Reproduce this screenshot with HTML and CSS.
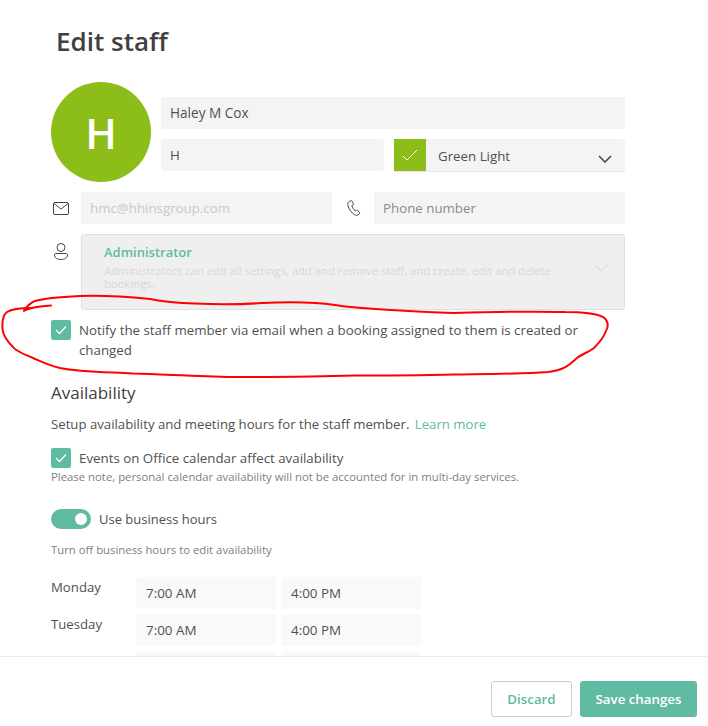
FILE: index.html
```html
<!DOCTYPE html>
<html lang="en">
<head>
<meta charset="utf-8">
<title>Edit staff</title>
<link rel="stylesheet" href="styles.css">
</head>
<body>
<div class="page">
  <main class="content">
    <h1 class="title">Edit staff</h1>
    <section class="identity">
      <div class="avatar">H</div>
      <div class="identity-fields">
        <div class="field name-field">Haley M Cox</div>
        <div class="identity-row">
          <div class="field grow">H</div>
          <div class="color-select">
            <span class="swatch"><svg width="16" height="12" viewBox="0 0 16 12"><path d="M1 7l4 4L15 1" fill="none" stroke="#fff" stroke-width="1"/></svg></span>
            <span class="color-name">Green Light</span>
            <svg class="chev" width="14" height="8" viewBox="0 0 14 8"><path d="M1 1l6 6 6-6" fill="none" stroke="#444" stroke-width="1.5"/></svg>
          </div>
        </div>
      </div>
    </section>
    <section class="contact">
      <svg class="icon-mail" width="16" height="13" viewBox="0 0 16 13"><rect x=".5" y=".5" width="15" height="12" rx="1.5" fill="none" stroke="#444"/><path d="M1 1.5l7 5.5 7-5.5" fill="none" stroke="#444"/></svg>
      <div class="field grow muted">hmc@hhinsgroup.com</div>
      <svg class="icon-phone" width="14" height="16" viewBox="0 0 14 16"><path d="M3.5.8L1.6 2C.6 2.700.5 4 .9 5.500c1 3.600 3.500 7.200 6.800 9.300 1 .6 2 .8 3 .2l1.500-1c.5-.4.5-.9.200-1.400l-1.500-2c-.4-.5-.9-.6-1.400-.3l-1.300.8C6.700 9.600 5.300 7.400 4.800 5.700l1.200-.9c.4-.3.500-.8.300-1.300L5 1.200C4.700.6 4.100.4 3.500.8z" fill="none" stroke="#444"/></svg>
      <div class="field grow placeholder">Phone number</div>
    </section>
    <section class="role-row">
      <svg class="icon-person" width="14" height="18" viewBox="0 0 14 18"><circle cx="7" cy="4.500" r="4" fill="none" stroke="#444"/><path d="M2 10.500h10c1 0 1.500.5 1.500 1.500 0 3-3 4.500-6.500 4.500S.5 15 .5 12c0-1 .5-1.500 1.500-1.500z" fill="none" stroke="#444"/></svg>
      <div class="role">
        <div class="role-text">
          <div class="role-name">Administrator</div>
          <div class="role-desc">Administrators can edit all settings, add and remove staff, and create, edit and delete bookings.</div>
        </div>
        <svg class="role-chev" width="14" height="8" viewBox="0 0 14 8"><path d="M1 1l6 6 6-6" fill="none" stroke="#ddd" stroke-width="1.200"/></svg>
      </div>
    </section>
    <label class="check notify">
      <span class="box"><svg width="12" height="10" viewBox="0 0 12 10"><path d="M1 5l3.500 3.500L11 1.500" fill="none" stroke="#fff" stroke-width="1.300"/></svg></span>
      <span class="check-text">Notify the staff member via email when a booking assigned to them is created or changed</span>
    </label>
    <h2 class="section-title">Availability</h2>
    <p class="intro">Setup availability and meeting hours for the staff member. <a class="link">Learn more</a></p>
    <label class="check events">
      <span class="box"><svg width="12" height="10" viewBox="0 0 12 10"><path d="M1 5l3.500 3.500L11 1.500" fill="none" stroke="#fff" stroke-width="1.300"/></svg></span>
      <span class="check-text">Events on Office calendar affect availability</span>
    </label>
    <p class="note events-note">Please note, personal calendar availability will not be accounted for in multi-day services.</p>
    <div class="toggle-row">
      <span class="toggle"><span class="knob"></span></span>
      <span class="toggle-label">Use business hours</span>
    </div>
    <p class="note hours-note">Turn off business hours to edit availability</p>
    <div class="hours">
      <div class="day">Monday</div><div class="time">7:00 AM</div><div class="time">4:00 PM</div>
      <div class="day">Tuesday</div><div class="time">7:00 AM</div><div class="time">4:00 PM</div>
      <div class="day"></div><div class="time"></div><div class="time"></div>
    </div>
  </main>
  <footer class="footer">
    <button class="btn btn-ghost">Discard</button>
    <button class="btn btn-primary">Save changes</button>
  </footer>
  <svg class="scribble" width="708" height="726" viewBox="0 0 708 726"><path d="M51 305.500C42 306 32 307 24 310.500M24 311C27 306 30 303 35 301C45 298 60 297 80 296C105 295 130 297 150 299C165 302 178 303 195 303.500C215 304.500 240 304.500 262 303C285 302 315 302 335 305C360 309 400 311 454 313C490 312 530 311 565 312C580 312 595 313 603 317C608 320 609 326 606 331C603 339 598 344 594 348C589 352 582 354 577 358C570 364 565 370 548 372C520 374 490 374 454 374.500C420 375 390 375.500 354 375.500C310 377 270 377 233 377C195 376 165 374.500 133 373.500C105 372 80 372 60 368C48 365 40 361 33 358C24 354 17 352 13 347C7 341 3 336 2.500 329C2 322 3 315 7 312C12 309 20 308 30 308" fill="none" stroke="#f00" stroke-width="2" stroke-linecap="round" stroke-linejoin="round"/></svg>
</div>
</body>
</html>
```
FILE: styles.css
```css
* { box-sizing: border-box; }
html, body { margin: 0; padding: 0; background: #fff; }
body { font-family: "Open Sans", "Noto Sans", "Liberation Sans", sans-serif; color: #444; font-size: 13.3px; }
.page { position: relative; width: 708px; height: 726px; display: flex; flex-direction: column; overflow: hidden; }
.content { height: 656px; flex: none; overflow: hidden; padding: 24px 83px 0 51px; }
.title { margin: 0 0 24px 5px; height: 34px; font-size: 26px; line-height: 34px; font-weight: 600; color: #404040; }
.identity { display: flex; gap: 10px; align-items: flex-start; height: 100px; }
.avatar { width: 100px; height: 100px; border-radius: 50%; background: #8cbd18; color: #fff; font-size: 42px; font-weight: 600; display: flex; align-items: center; justify-content: center; flex: none; }
.identity-fields { flex: 1; display: flex; flex-direction: column; gap: 10px; margin-top: 15px; }
.identity-row { display: flex; gap: 10px; }
.field { height: 32px; background: #f4f4f4; border-radius: 2px; padding: 0 9px; display: flex; align-items: center; font-size: 13.3px; color: #505050; }
.name-field { font-size: 13.6px; padding-bottom: 1px; }
.grow { flex: 1 1 0; min-width: 0; }
.muted { color: #c8c8c8; }
.placeholder { color: #8a8a8a; }
.color-select { width: 231px; height: 33px; flex: none; background: #f4f4f4; border-bottom: 1px solid #e8e8e8; border-radius: 2px; display: flex; align-items: center; position: relative; }
.swatch { width: 32px; height: 32px; background: #8cbd18; display: flex; align-items: center; justify-content: center; align-self: flex-start; }
.color-name { margin-left: 12px; padding-top: 1px; color: #505050; }
.chev { position: absolute; right: 13px; top: 16px; }
.contact { display: flex; align-items: center; margin: 10px 0 10px 2px; height: 32px; }
.icon-mail { flex: none; margin-right: 12px; }
.icon-phone { flex: none; margin: 0 13px 0 15px; }
.role-row { display: flex; align-items: flex-start; }
.icon-person { flex: none; margin: 9px 13px 0 3px; }
.role { flex: 1; height: 76px; background: #efefef; border: 1px solid #e0e0e0; border-radius: 3px; padding: 9px 16px 10px 22px; display: flex; align-items: center; }
.role-text { width: 470px; flex: none; align-self: flex-start; }
.role-name { color: #5fbba1; font-weight: 600; font-size: 13px; line-height: 16px; }
.role-desc { color: #d8d8d8; font-size: 11.3px; line-height: 12.5px; margin-top: 5px; }
.role-chev { flex: none; margin-left: 20px; margin-top: -8px; }
.check { display: flex; align-items: flex-start; gap: 8px; }
.box { width: 20px; height: 20px; flex: none; background: #5fbba1; border-radius: 2px; display: flex; align-items: center; justify-content: center; }
.check-text { font-size: 13.3px; line-height: 20px; color: #505050; }
.notify { margin-top: 10px; }
.section-title { margin: 22px 0 0; font-size: 17px; line-height: 22px; font-weight: 400; color: #404040; }
.intro { margin: 10px 0 0; font-size: 13.2px; line-height: 20px; color: #505050; }
.link { color: #5fbba1; margin-left: 2px; }
.events { margin-top: 14px; }
.note { margin: 0; font-size: 11.35px; line-height: 16px; color: #808080; }
.events-note { margin-top: 1px; }
.toggle-row { display: flex; align-items: center; gap: 8px; margin-top: 24px; }
.toggle { width: 40px; height: 20px; background: #5fbba1; border-radius: 10px; display: flex; align-items: center; justify-content: flex-end; padding-right: 4px; }
.knob { width: 12px; height: 12px; border-radius: 50%; background: #fff; }
.toggle-label { font-size: 13px; color: #505050; }
.hours-note { margin-top: 13px; }
.hours { display: grid; grid-template-columns: 80px 140px 140px; column-gap: 5px; row-gap: 5px; margin-top: 19px; }
.day { font-size: 13.2px; line-height: 20px; color: #505050; }
.time { height: 32px; background: #f9f9f9; border-radius: 2px; padding: 0 10px; display: flex; align-items: center; font-size: 13.4px; color: #505050; }
.footer { flex: 1; border-top: 1px solid #ececec; display: flex; justify-content: flex-end; align-items: flex-start; gap: 8px; padding: 24px 11px 0 0; }
.btn { height: 36px; border-radius: 3px; font-family: inherit; font-size: 13.3px; font-weight: 600; }
.btn-ghost { width: 81px; background: #fff; border: 1px solid #ccc; color: #5fbba1; }
.btn-primary { width: 117px; background: #5fbba1; border: 0; color: #fff; }
.scribble { position: absolute; left: 0; top: 0; pointer-events: none; }
```
